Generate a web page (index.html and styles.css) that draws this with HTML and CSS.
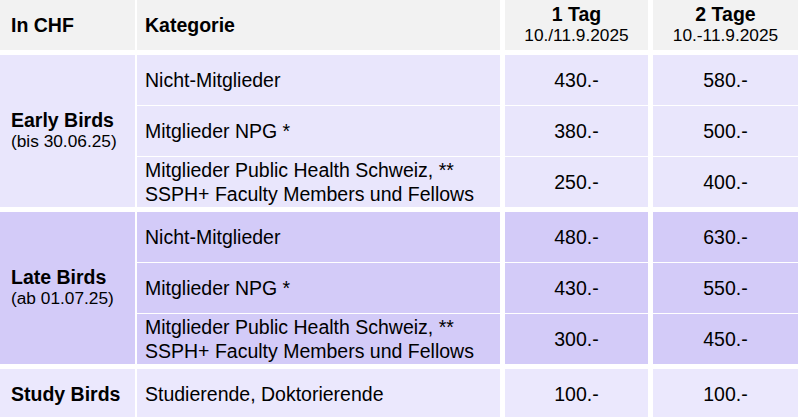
FILE: index.html
```html
<!DOCTYPE html>
<html lang="de">
<head>
<meta charset="utf-8">
<title>Preise</title>
<link rel="stylesheet" href="styles.css">
</head>
<body>
<div class="table">
  <div class="group head">
    <div class="label"><span class="bold">In CHF</span></div>
    <div class="rows">
      <div class="row">
        <div class="cat"><span class="bold">Kategorie</span></div>
        <div class="price"><span class="bold">1 Tag</span><span class="sub">10./11.9.2025</span></div>
        <div class="price"><span class="bold">2 Tage</span><span class="sub">10.-11.9.2025</span></div>
      </div>
    </div>
  </div>

  <div class="group early">
    <div class="label"><span class="bold">Early Birds</span><span class="sub">(bis 30.06.25)</span></div>
    <div class="rows">
      <div class="row">
        <div class="cat">Nicht-Mitglieder</div>
        <div class="price">430.-</div>
        <div class="price">580.-</div>
      </div>
      <div class="row">
        <div class="cat">Mitglieder NPG *</div>
        <div class="price">380.-</div>
        <div class="price">500.-</div>
      </div>
      <div class="row">
        <div class="cat two">Mitglieder Public Health Schweiz, **<br>SSPH+ Faculty Members und Fellows</div>
        <div class="price">250.-</div>
        <div class="price">400.-</div>
      </div>
    </div>
  </div>

  <div class="group late">
    <div class="label"><span class="bold">Late Birds</span><span class="sub">(ab 01.07.25)</span></div>
    <div class="rows">
      <div class="row">
        <div class="cat">Nicht-Mitglieder</div>
        <div class="price">480.-</div>
        <div class="price">630.-</div>
      </div>
      <div class="row">
        <div class="cat">Mitglieder NPG *</div>
        <div class="price">430.-</div>
        <div class="price">550.-</div>
      </div>
      <div class="row">
        <div class="cat two">Mitglieder Public Health Schweiz, **<br>SSPH+ Faculty Members und Fellows</div>
        <div class="price">300.-</div>
        <div class="price">450.-</div>
      </div>
    </div>
  </div>

  <div class="group study">
    <div class="label"><span class="bold">Study Birds</span></div>
    <div class="rows">
      <div class="row">
        <div class="cat">Studierende, Doktorierende</div>
        <div class="price">100.-</div>
        <div class="price">100.-</div>
      </div>
    </div>
  </div>
</div>
</body>
</html>
```

FILE: styles.css
```css
html, body {
  margin: 0;
  padding: 0;
  background: #ffffff;
}
body {
  font-family: "Liberation Sans", Arial, sans-serif;
  color: #000000;
  font-size: 19.5px;
  overflow: hidden;
}
.table {
  width: 798px;
  display: flex;
  flex-direction: column;
  gap: 5px;
}
.group {
  display: flex;
  gap: 2px;
}
.label {
  width: 135px;
  box-sizing: border-box;
  padding-left: 11px;
  display: flex;
  flex-direction: column;
  justify-content: center;
  flex: none;
}
.rows {
  flex: 1;
  display: flex;
  flex-direction: column;
  gap: 1px;
}
.row {
  display: grid;
  grid-template-columns: 363px 143px 145px;
  column-gap: 5px;
  height: 50px;
}
.group.early .rows, .group.late .rows {
  background: rgba(255, 255, 255, 0.75);
}
.group.early .row, .group.late .row {
  position: relative;
}
.cat {
  padding-left: 8px;
  display: flex;
  align-items: center;
}
.cat.two {
  line-height: 24px;
  display: block;
  padding-top: 1px;
  align-self: center;
}
.price {
  display: flex;
  flex-direction: column;
  align-items: center;
  justify-content: center;
}
.bold {
  font-weight: bold;
}
.sub {
  font-size: 17.3px;
  line-height: 21px;
}
.head .label .bold, .head .cat .bold {
  line-height: 22px;
}
.head .price .bold {
  line-height: 21px;
}
.label .bold {
  line-height: 21px;
}

.head .label, .head .cat, .head .price { background: #f2f2f2; }
.early .label, .early .cat, .early .price { background: #e9e6fc; }
.late .label, .late .cat, .late .price { background: #d3cbf8; }
.study .label, .study .cat, .study .price { background: #ebe8fd; }

.late .label, .early .label { padding-bottom: 0; }
.cat.two {
  height: 50px;
  box-sizing: border-box;
  padding-top: 1px;
}
```
